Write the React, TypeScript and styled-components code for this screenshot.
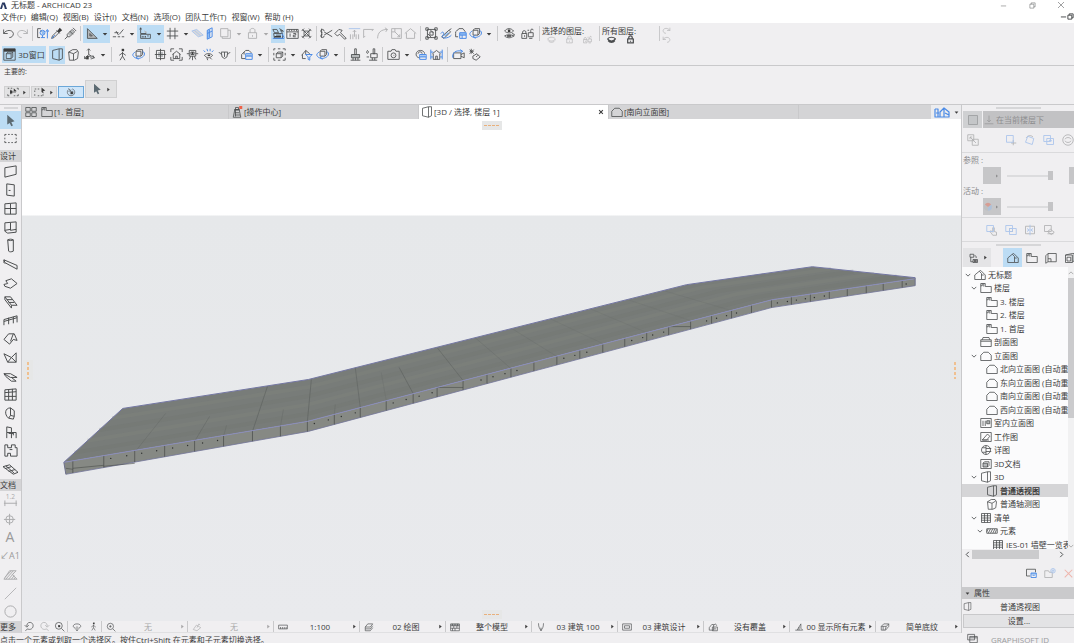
import React from "react";
import styled, { createGlobalStyle, css } from "styled-components";

const Global = createGlobalStyle`
  * { box-sizing: border-box; }
  body { margin: 0; overflow: hidden; }
  button, input { font: inherit; color: inherit; }
  ul { list-style: none; margin: 0; padding: 0; }
`;

const ink = "#3c3c3c";
const stroke = "#4a4c4e";
const blue = "#4a8ae6";
const line = "#c9c9cb";
const shade = "#d4d4d6";
const highlight = "#bcdcf4";

/* ---------- Icons: 16 x 16 grid; k = dark line, b = blue line, f = dark fill, p = blue fill, g = grey fill ---------- */
type Glyph = { k?: string; b?: string; f?: string; p?: string; g?: string; r?: string; t?: string };

const glyphs: Record<string, Glyph> = {
  logo: { p: "M0 16L5 1h6l5 15h-5C10 9 8 6 6 5C7 9 6 13 4 16Z" },
  undo: { k: "M2 3v5h5M2 8C5 3 13 3 14 8c0 3-2 5-5 5" },
  redo: { k: "M14 3v5H9M14 8C11 3 3 3 2 8c0 3 2 5 5 5" },
  pick: { k: "M6 2H2v11h3M5 5h2", b: "M8 7m-3 0a3 3 0 1 0 6 0a3 3 0 1 0-6 0M14 14V4M12 6l2-3 2 3M6 13h5M8 10v3", p: "M7 5h3v4H7z" },
  dropper: { k: "M2 14l1-3 6-6 2 2-6 6zM8 4l4 4", f: "M9 5l3-4 3 3-4 3z", b: "M2 14l4-4" },
  syringe: { k: "M1 15l3-3M4 9l6-6 3 3-6 6H4zM11 1l4 4M7 5l4 4", g: "M5 9l5-5 2 2-5 5z" },
  setsq: { k: "M3 2v12h12zM6 8v3h3z", g: "M3 2v12h12zM6 8v3h3z" },
  guide: { k: "M1 12h4M7 12h3M12 12h3M3 7h5M9 9l5-6M5 5l3 5" },
  coord: { k: "M2 1v7h7M1 3l1-2 1 2M2 9h12v5H2zM4 11v2M6 11v2M8 11v2M10 11h2", g: "M6 4l4 2-2 2z" },
  grid: { k: "M5 1v14M11 1v14M1 5h14M1 11h14" },
  planes: { b: "M1 5l6-2 8 7-6 2zM4 4l8 7", g: "M1 5l6-2 8 7-6 2z" },
  slab: { b: "M4 4l6-3v11l-6 3zM7 3v10M4 8l6-3", p: "M4 4l3-1v10l-3 2z" },
  frames: { k: "M2 2h9v10H2zM4 12v2h10V4h-3" },
  lock: { k: "M5 7V4c0-3 6-3 6 0v3M3 7h10v7H3zM8 10v2" },
  surface: { k: "M1 3h5l2 4H3zM2 8h11v6H3zM9 2l5 3-3 3M5 10h6", f: "M3 11h8v2H3zM10 3l3 2-2 1z", b: "M1 14h14M12 8l3 5" },
  ruler: { k: "M1 3h14v11H1zM1 6h14M4 3v2M7 3v2M10 3v2M13 3v2M5 8v4M9 8h3v2H9v2h3" },
  cross: { k: "M3 3l10 10M13 3L3 13M5 5h6v6H5zM2 5l3-3M11 2l3 3M2 11l3 3M14 11l-3 3" },
  scissors: { k: "M2 2v11M15 4L5 10M15 12L5 6M5 5a2 2 0 1 0-2 2M3 9a2 2 0 1 0 2 2" },
  bend: { k: "M1 8l5-5 4 1-2 3 7 7-2 1-6-6-3 2z" },
  lift: { k: "M3 15V9M6 15V9M10 15V9M13 15V9M8 12V4M6 6l2-2 2 2", b: "M1 2h14" },
  elbow: { k: "M2 13V3h12M2 13l2-2M14 3l-2 2" },
  arc: { k: "M2 14C2 7 6 3 14 3M11 1l3 2-2 3" },
  expand: { k: "M2 2h12v12H2zM6 2v4H2M6 6l6 6M9 12h3V9" },
  house: { k: "M1 8l7-6 7 6M3 7v7h10V7" },
  group: { k: "M3 3h10v10H3zM1 1h3v3H1zM12 1h3v3h-3zM1 12h3v3H1zM12 12h3v3h-3zM6 6h4v4H6zM6 3l4 4M3 8l5 5" },
  pens: { k: "M2 12l9-8 2 2-8 8zM11 4l3-2", b: "M1 8c3-4 5 0 2 3c-1 4 8 3 11-1", p: "M5 10l5-4 1 2-5 4z" },
  cloudtable: { k: "M5 12H2V8C1 4 5 5 6 2h5l3 4", b: "M7 7h8v7H7zM7 10h8M10 10v4", p: "M7 7h8v3H7z" },
  orbit: { k: "M5 4h6v6H5zM5 4l2-2h6v6l-2 2", b: "M4 5C0 7 0 10 4 12c4 2 9 0 11-3c1-2 0-4-2-5M8 14l-3-2 3-2" },
  eyes: { k: "M2 5c3-4 8-4 11 0c-3 3-8 3-11 0M2 11c3-2 8-2 11 0c-3 3-8 3-11 0M11 8l3 1-1 3", f: "M6 3h3v3H6zM5 10h5v2H5z" },
  locks: { k: "M1 8h6v6H1zM2 8V6c0-2 4-2 4 0v2M9 7h6v5H9zM12 7V4c0-2 3-2 3 0M8 4h2M10 14h4", f: "M4 10h1v2H4z" },
  eye: { k: "M1 7c3-4 11-4 14 0c-3 5-11 5-14 0M2 10c3 4 9 4 12 0" },
  cubeview: { k: "M1 1h14v14H1zM1 4h14M4 7l2-2h6v6l-2 2H4zM4 7h6v6M10 7l2-2", f: "M1 1h14v3H1z" },
  persp: { k: "M2 3l8-2v14l-8-2zM10 1h4v12l-4 2" },
  axono: { k: "M2 5l5-3h5l2 3-1 8-4 2H3zM2 5l6 2 5-3M8 7v8" },
  axes: { k: "M7 1v7L2 13M7 8l7 4M5 11c3-2 6 0 5 3M5 3l2-2 2 2M2 10v3h3M12 9l2 3-3 1", f: "M4 10h3v4H4z" },
  walk: { k: "M8 5v5l-3 5M8 10l3 5M8 6L4 9M8 6l4 3", f: "M7 1h3v3H7z" },
  target: { k: "M8 1v14M1 8h14M3 3h10v10H3z", g: "M5 5h6v6H5z" },
  homezoom: { k: "M1 5V1h4M11 1h4v4M15 11v4h-4M5 15H1v-4M3 8l5-4 5 4M4 7v6h8V7M7 13v-3h2v3" },
  robot: { k: "M4 3h8v7H4zM6 5h4v3H6zM1 7h3M12 7h3M6 10l-2 4M10 10l2 4M8 10v5", f: "M7 5h2v3H7z" },
  sun: { k: "M3 9c3-3 7-3 10 0c-3 4-7 4-10 0M6 12l1 3M10 12l2 2", b: "M2 3l2 2M6 1l1 3M10 1v3M14 3l-2 2", f: "M7 8h3v2H7z" },
  glasses: { k: "M4 5h8l-1 6-3 2-3-2zM1 5l3 3M15 5l-3 3M8 5v6" },
  layered: { k: "M2 8l5-5h4l3 3M2 8v5h5M5 8V5", b: "M7 7h8v7H7zM7 10h8", p: "M8 8h6v2H8z" },
  selcube: { k: "M1 3V1h2M6 1h3M12 1h3v2M15 6v3M15 12v3h-3M9 15H6M3 15H1v-3M1 9V6M4 7l2-2h6v5l-2 2H4zM4 7h6v5M10 7l2-2" },
  filter: { k: "M2 9l5-6 5 4M3 8v5h4M7 3v5", b: "M7 8h8l-3 3v4l-2-1v-3z" },
  brush: { k: "M7 1h2v7H7zM3 8h10v4H3zM2 15h12M5 12v3M8 12v3M11 12v3", g: "M3 8h10v4H3z" },
  brushdrop: { k: "M10 1h2v6h-2zM7 7h8v5H7zM5 15h10M9 12v3M12 12v3M3 3c-3 4 2 5 1 1zM2 11h3" },
  camera: { k: "M1 4h4l1-2h4l1 2h4v10H1zM8 9m-3 0a3 3 0 1 0 6 0a3 3 0 1 0-6 0M8 9h1" },
  camtable: { k: "M7 12C1 12 1 3 8 3c3 0 5 2 5 4M5 7c0-3 5-3 5 0", b: "M7 8h8v6H7zM7 11h8", p: "M8 9h6v2H8z" },
  housegrid: { k: "M3 7l5-4 5 4M4 7v7h8V7M7 14v-4h2v4", b: "M1 2v12M15 2v12M1 5h3M12 5h3M1 11h3M12 11h3" },
  fly: { k: "M2 6h9v7H2zM11 8l4-2v6l-4-2", b: "M1 12C0 6 4 2 13 4M10 2l3 2-2 2" },
  gears: { k: "M2 4h5M4 1v6M2 2l5 5M7 2L2 7M6 10l5-3 4 4-5 4-4-2zM10 11l2-2" },
  arrow: { f: "M4 1l9 8-4 1 2 4-2 1-2-4-3 2z", g: "M5 3l6 5-3 1 1 4-2-4-2 1z" },
  marquee: { k: "M1 3h2M5 3h2M9 3h2M13 3h2v2M15 7v2M15 11v2h-2M11 13H9M7 13H5M3 13H1v-2M1 9V7M1 5V3" },
  selarrow: { k: "M1 3h2M13 3h2v2M15 11v2h-2M3 13H1v-2M4 8h8M5 5v6M9 13h2M5 3h2", f: "M9 3l4 4H9zM4 6h3v4H4z" },
  marqarrow: { k: "M1 4h2M5 4h2M1 13v-2M1 8V6M5 13h2M9 13h2M12 13v-2", f: "M10 2l5 4-3 1 1 3-3-2z" },
  spin: { k: "M4 4C0 8 3 14 8 14c7 0 8-9 2-11M4 8l4-4M8 7l-4-5M7 7h4v4H7z", f: "M8 8h3v3H8z" },
  wall: { k: "M2 4l12-2v9L2 14z" },
  door: { k: "M4 2l8 1v12l-8-1zM6 9h2" },
  window: { k: "M2 3l12-1v12H2zM8 3v11M2 8h12" },
  corner: { k: "M2 3l12-1v11l-9 1-3-2zM8 3v8l6-1M2 11l6-1" },
  column: { k: "M5 2c2-1 4-1 6 0v12c-2 1-4 1-5 0zM5 2c2 1 4 1 6 0" },
  beam: { k: "M1 3l14 6v4L2 6zM1 3v3l1 1" },
  slabt: { k: "M1 9l4-1-2-3 6-2 6 5-7 5-6-2z" },
  stair: { k: "M2 3h6l7 9H9zM4 6h6M6 9h6M2 3v3l7 9v-3" },
  rail: { k: "M1 7l14-4v7M1 7v6M6 5v7M11 4v7M1 9l14-4" },
  roof: { k: "M1 9l5-6h6l3 7-4-1-4 5zM11 3L8 11" },
  shell: { k: "M1 4l4 9 9 0V3l-5 5zM5 13l4-5 5 5" },
  sky: { k: "M1 5h7l7 4H8zM3 8l6 5h5l-5-4M1 5l2 3" },
  curtain: { k: "M2 3l12-1v12l-12 0zM6 3v11M10 2v12M2 6l12-1M2 10h12" },
  morph: { k: "M8 2C2 2 1 9 6 13l2-3zM8 2l4 3v6l-4-1M6 13l5 1 1-3" },
  chair: { k: "M4 2l5 1v5H4zM4 8v6M9 8h5v6M9 8v6M6 9h5M11 8v3" },
  zone: { k: "M2 2h3v3h4V2h4v3h2v9H8v-3H5v3H2zM7 7h3" },
  mesh: { k: "M0 5l7-2 9 8-5 2zM3 4l9 8M2 7l7-2M6 10l7-2" },
  dim: { k: "M1 12h14M2 9v6M14 9v6", t: "1.2" },
  level: { k: "M7 3v12M1 9h12M7 9m-4 0a4 4 0 1 0 8 0a4 4 0 1 0-8 0" },
  fill: { k: "M1 13l6-9h7l-4 4 5 5zM3 13l8-9M6 13l6-7M9 13l3-4M2 11l7-7M12 13l1-2" },
  diag: { k: "M1 15L15 1" },
  circle: { k: "M8 8m-6 0a6 6 0 1 0 12 0a6 6 0 1 0-12 0" },
  tiles: { k: "M1 2h6v5H1zM9 2h6v5H9zM1 9h6v5H1zM9 9h6v5H9z" },
  story: { k: "M1 14V2h6v4h8v8zM1 5h2V2M5 2v4" },
  lighthouse: { k: "M5 5h6l2 10H3zM6 2h4v3H6zM4 5h8M5 9h6M5 12h7M6 5v9", r: "M11 0h4v4h-4z" },
  elev: { k: "M1 14V7l4-4h6l4 4v7z" },
  section: { k: "M1 5h14v9H1zM3 5l1-3h8l1 3M1 7h14" },
  interior: { k: "M1 2h14v12H1zM4 5v7M7 5v7M9 5h4v4H9z", g: "M9 5h4v4H9z" },
  sheet: { k: "M1 2h14v12H1zM3 12l7-8 3 3-4 5zM3 12h9" },
  detail: { k: "M8 8m-6 0a6 6 0 1 0 12 0a6 6 0 1 0-12 0M8 2v12M8 6h7M8 10h7M3 5h5M3 11h5" },
  doc3d: { k: "M1 2h14v12H1zM4 7l2-2h6v5l-2 2H4zM4 7h6v5", g: "M4 7h6v5H4z" },
  list: { k: "M2 2h12v12H2zM6 2v12M10 2v12M2 5h12M2 8h12M2 11h12" },
  wallhatch: { k: "M1 5h14v6H1zM3 11l3-6M6 11l3-6M9 11l3-6M12 11l2-5M1 9l2-4" },
  project: { k: "M1 14V8l6-5 3 3v8zM7 3l2-1 6 6v6h-5M10 8h3" },
  camhouse: { b: "M1 5h3v8M1 5v8h5M2 9h3M6 13V8l4-4 5 4v5zM10 4v9M11 9l4 2" },
  fit: { k: "M7 7m-5 0a5 5 0 1 0 10 0a5 5 0 1 0-10 0M11 11l4 4M5 7h4M7 5v4" },
  zoomin: { k: "M7 7m-5 0a5 5 0 1 0 10 0a5 5 0 1 0-10 0M11 11l4 4", f: "M6 6h3v3H6z" },
  zprev: { k: "M6 12c8 2 10-9 3-10C5 2 4 5 4 8M1 6l3 3 3-3M2 14l4-3" },
  znext: { k: "M10 12C2 14 0 3 7 2c4 0 5 3 5 6M9 6l3 3 3-3M14 14l-4-3" },
  turn: { k: "M6 10C0 9 1 3 8 3s8 6 2 7M8 7v7M6 12l2 2 2-2" },
  scale: { k: "M1 5h14v6H1zM4 8v3M7 8v3M10 8v3M13 8v3" },
  layers: { k: "M2 8l4-5h8l-4 5zM2 11h1h7l4-5M2 14h8l4-5M2 8v6" },
  model: { k: "M1 3h14v11H1zM4 3v3M8 3v3M12 3v3M1 6h14M1 10h14M6 6v4M11 6v4M4 10v4M8 10v4", g: "M1 3h14v3H1z" },
  pen: { k: "M4 2c0 7 2 8 4 12c2-4 4-5 4-12M8 9v5" },
  mvo: { k: "M1 3h14v10H1zM4 6h8v4H4z" },
  over: { k: "M2 9l4-5h3v9H2zM7 8h8v6H7zM9 5l3-2 2 3M9 11h4" },
  reno: { k: "M2 13h12l-3-3V3L5 13M8 8v5" },
  hatch: { k: "M2 7l4-4h8v4l-5 6H2zM2 7h8l4-4M8 13l2-6M5 7v6" },
  angle: { k: "M2 12l5-7 7 4-6 5zM8 9l3-6 2 2" },
  plane: { k: "M2 2h12v12H2z", g: "M2 2h12v12H2z" },
  below: { k: "M8 1v10M5 8l3 3 3-3M1 14h14" },
  swap: { k: "M1 1h8v8H1zM7 7h8v8H7zM4 4l8 8M4 7V4h3" },
  move: { b: "M2 2h9v9H2z", k: "M11 8v7M8 12h7" },
  rotate: { b: "M5 3l8 3-2 8-9-3z", k: "M3 5c2-3 6-4 9-1" },
  offset: { b: "M1 2h9v8H1zM5 6h9v8H5zM8 9h4M8 9l2-2" },
  refresh: { k: "M8 8m-7 0a7 7 0 1 0 14 0a7 7 0 1 0-14 0M4 7c1-3 7-3 8 0M12 9c-1 3-7 3-8 0" },
  hand: { b: "M1 2h9v8H1z", k: "M7 12l-2-2 2-1 2 2V5h2v5l3 1v4H9z" },
  dup: { b: "M1 2h9v8H1zM6 6h9v8H6z", k: "M6 6h4v4H6z" },
  split: { k: "M2 3h12v10H2z", b: "M8 1v14M4 6l3 2-3 2M12 6L9 8l3 2" },
  erase: { k: "M2 2h9v8H2zM6 10l4-3 5 4-4 3zM6 13h8" },
  traceball: { r: "M8 8L3 4A6 6 0 0 1 13 4z", p: "M8 8l5-4a6 6 0 0 1-5 10z", g: "M8 8v6A6 6 0 0 1 3 4z" },
  people: { k: "M4 3h5v4H4zM5 7v6h3M8 10h6v4H8zM10 5c2 0 3 1 2 3", f: "M9 11h4v2H9z" },
  layout: { k: "M4 2h11v11H4zM4 13l-3 2V5l3-3M4 9h4v4" },
  book: { k: "M2 4l9-2h3v9l-3 3H2zM2 4h9v10M4 7h5v5H4z", g: "M11 4l3-2v9l-3 3z" },
  saveview: { k: "M7 12H2V3h12v4", b: "M8 8h7v6H8zM10 11h3", p: "M8 8h7v2H8z" },
  newview: { k: "M1 14V5h5l1 2h4v7z", b: "M12 5m-3 0a3 3 0 1 0 6 0a3 3 0 1 0-6 0M10 5h4M12 3v4" },
  del: { r: "M2 3l1-1 5 5 5-5 1 1-5 5 5 5-1 1-5-5-5 5-1-1 5-5z" },
  windows: { k: "M1 2h10v8H1zM4 5h11v9H4zM4 7h11" },
  min: { k: "M2 9h12" },
  max: { k: "M2 5h9v9H2zM5 5V2h9v9h-3" },
  close: { k: "M2 2l12 12M14 2L2 14" },
  closetab: { f: "M2 4l2-2 4 4 4-4 2 2-4 4 4 4-2 2-4-4-4 4-2-2 4-4z" },
  down: { f: "M2 5h12l-6 7z" },
  right: { f: "M4 2l8 6-8 6z" },
  chev: { k: "M2 5l6 6 6-6" },
  chevl: { k: "M11 2L5 8l6 6" },
  chevr: { k: "M5 2l6 6-6 6" },
  chevu: { k: "M2 11l6-6 6 6" },
};

const Svg = styled.svg<{ $muted?: boolean }>`
  display: block;
  flex: none;
  opacity: ${(p) => (p.$muted ? 0.4 : 1)};
`;

const Icon = ({ name, size = 13, muted, bold }: { name: string; size?: number; muted?: boolean; bold?: boolean }) => {
  const g = glyphs[name];
  const w = bold ? 2.2 : 1.05;
  return (
    <Svg width={size} height={size} viewBox="0 0 16 16" fill="none" $muted={muted} aria-hidden="true" strokeLinejoin="round">
      {g.g && <path d={g.g} fill={name === "arrow" ? "#7d8b93" : "#b5b8ba"} />}
      {g.p && <path d={g.p} fill={name === "logo" ? "#26365f" : "#8fbcf2"} />}
      {g.k && <path d={g.k} stroke={stroke} strokeWidth={w} />}
      {g.b && <path d={g.b} stroke={blue} strokeWidth={1.2} />}
      {g.f && <path d={g.f} fill={name === "arrow" ? "#5c6a72" : ink} />}
      {g.r && <path d={g.r} fill="#ef6148" />}
      {g.t && <text x="3" y="7" fontSize="7" fill={ink}>{g.t}</text>}
    </Svg>
  );
};

/* ---------- Frame ---------- */
const Shell = styled.div`
  display: flex;
  flex-direction: column;
  height: 100vh;
  overflow: hidden;
  background: #f0eff1;
  color: ${ink};
  font-family: "Open Sans", "Noto Sans CJK SC", sans-serif;
  font-size: 8px;
  line-height: 10px;
  white-space: nowrap;
`;
const bare = css`
  margin: 0;
  padding: 0;
  border: 0;
  background: none;
  display: flex;
  align-items: center;
  justify-content: center;
`;
const TitleBar = styled.header`
  display: flex;
  align-items: center;
  height: 10px;
  background: #fff;
  flex: none;
`;
const Title = styled.h1`
  margin: 0 auto 0 4px;
  font-size: 8px;
  font-weight: 400;
  line-height: 10px;
`;
const WinButton = styled.button<{ $w: number }>`
  ${bare}
  width: ${(p) => p.$w}px;
  height: 10px;
`;
const MenuBar = styled.nav`
  display: flex;
  align-items: center;
  gap: 5px;
  height: 13px;
  padding-left: 1px;
  background: #fff;
  flex: none;
`;
const MenuItem = styled.button`
  ${bare}
  height: 13px;
`;
const MdiButtons = styled.div`
  display: flex;
  margin-left: auto;
`;
const Toolbar = styled.div<{ $last?: boolean }>`
  display: flex;
  align-items: center;
  height: ${(p) => (p.$last ? 22 : 21)}px;
  padding-left: ${(p) => (p.$last ? 2 : 1)}px;
  border-bottom: ${(p) => (p.$last ? `1px solid ${line}` : "0")};
  flex: none;
`;
const Tool = styled.button<{ $w: number; $on?: boolean }>`
  ${bare}
  width: ${(p) => p.$w}px;
  height: 18px;
  flex: none;
  background: ${(p) => (p.$on ? highlight : "transparent")};
`;
const Rule = styled.span`
  width: 6px;
  height: 15px;
  flex: none;
  display: flex;
  justify-content: center;
  &::before {
    content: "";
    width: 1px;
    background: ${line};
  }
`;
const WindowButton = styled.button`
  ${bare}
  gap: 2px;
  width: 44px;
  height: 17px;
  margin-right: 3px;
  background: ${highlight};
`;
const LayerGroup = styled.div<{ $w: number }>`
  width: ${(p) => p.$w}px;
  height: 20px;
  padding-top: 2px;
  flex: none;
`;
const LayerIcons = styled.div`
  display: flex;
`;
const LayerIcon = styled.button`
  ${bare}
  width: 19px;
  height: 8px;
`;
const InfoBar = styled.div`
  display: flex;
  flex-direction: column;
  justify-content: space-between;
  height: 39px;
  padding: 1px 4px 6px;
  border-bottom: 1px solid ${line};
  font-size: 7px;
  flex: none;
`;
const InfoButtons = styled.div`
  display: flex;
  align-items: flex-end;
  gap: 1px;
`;
const InfoButton = styled.button<{ $on?: boolean; $tall?: boolean }>`
  ${bare}
  gap: 3px;
  width: ${(p) => (p.$tall ? 32 : 26)}px;
  height: ${(p) => (p.$tall ? 18 : 12)}px;
  background: ${(p) => (p.$on ? "#cfe6fa" : "#e2e2e3")};
  border: 1px solid ${(p) => (p.$on ? "#6ba7d8" : "#d0d0d1")};
`;
const Body = styled.div`
  display: flex;
  flex: 1;
  min-height: 0;
`;

/* ---------- Toolbox ---------- */
const Toolbox = styled.aside`
  display: flex;
  flex-direction: column;
  width: 22px;
  flex: none;
  border-right: 1px solid ${line};
`;
const Grip = styled.div<{ $w: number }>`
  height: 6px;
  display: flex;
  align-items: center;
  justify-content: center;
  flex: none;
  &::before {
    content: "";
    width: ${(p) => p.$w}px;
    height: 2px;
    background: #d6d6d8;
  }
`;
const SelectTools = styled.div`
  display: flex;
  flex-direction: column;
  height: 39px;
  padding-bottom: 3px;
  flex: none;
`;
const ToolGroup = styled.div<{ $n: number }>`
  display: flex;
  flex-direction: column;
  flex: ${(p) => p.$n};
  min-height: 0;
`;
const SideTool = styled.button<{ $on?: boolean }>`
  ${bare}
  flex: 1;
  min-height: 0;
  padding-right: 1px;
  background: ${(p) => (p.$on ? highlight : "transparent")};
`;
const SideText = styled.span<{ $size: number }>`
  font-size: ${(p) => p.$size}px;
  color: #9a9a9a;
`;
const SideHeader = styled.h2`
  margin: 0;
  height: 12px;
  font-size: 8px;
  font-weight: 400;
  line-height: 12px;
  background: ${shade};
  flex: none;
`;

/* ---------- Centre ---------- */
const Center = styled.main`
  display: flex;
  flex-direction: column;
  flex: 1;
  min-width: 0;
`;
const Tabs = styled.div`
  display: flex;
  height: 14px;
  background: ${shade};
  flex: none;
`;
const Tab = styled.button<{ $on?: boolean }>`
  ${bare}
  justify-content: flex-start;
  flex: 0 1 190px;
  min-width: 0;
  gap: 1px;
  padding: 0 4px 0 2px;
  background: ${(p) => (p.$on ? "#fff" : "transparent")};
  border-right: 1px solid ${line};
`;
const TabClose = styled.span`
  margin-left: auto;
`;
const TabExtra = styled.button<{ $w: number; $end?: boolean }>`
  ${bare}
  gap: 4px;
  width: ${(p) => p.$w}px;
  flex: none;
  margin-left: ${(p) => (p.$end ? "auto" : "0")};
  background: ${(p) => (p.$end ? "#ececee" : "transparent")};
`;
const Viewport = styled.section`
  position: relative;
  flex: 1;
  min-height: 0;
  background: linear-gradient(#fff 0 96px, #e6e8ea 97px, #e9eaed 100%);
`;
const Scene = styled.svg`
  display: block;
  width: 100%;
  height: 100%;
`;
const Dots = styled.span<{ $side: "top" | "bottom" | "left" | "right" }>`
  position: absolute;
  display: flex;
  align-items: center;
  justify-content: center;
  background: #e6e7e7;
  ${(p) =>
    p.$side === "top" || p.$side === "bottom"
      ? css`
          ${p.$side}: 2px;
          left: 50%;
          margin-left: -10px;
          width: 20px;
          height: 9px;
          &::before {
            content: "";
            width: 15px;
            height: 1px;
            background: repeating-linear-gradient(90deg, #e9b07c 0 3px, transparent 3px 4px);
          }
        `
      : css`
          ${p.$side}: 1px;
          top: 50%;
          margin-top: -10px;
          width: 10px;
          height: 20px;
          &::before {
            content: "";
            width: 2px;
            height: 17px;
            background: repeating-linear-gradient(#f0c08f 0 3px, transparent 3px 5px);
          }
        `}
`;
const QuickBar = styled.div`
  display: flex;
  height: 12px;
  flex: none;
  border-bottom: 1px solid #e0e0e2;
`;
const QuickTools = styled.div<{ $w: number }>`
  display: flex;
  width: ${(p) => p.$w}px;
  justify-content: space-around;
  flex: none;
  border-right: 1px solid ${line};
`;
const QuickIcon = styled.button`
  ${bare}
`;
const QuickOption = styled.button<{ $muted?: boolean }>`
  ${bare}
  flex: 1 1 0;
  min-width: 0;
  padding: 0 2px 0 4px;
  border-right: 1px solid ${line};
  color: ${(p) => (p.$muted ? "#a9a9a9" : ink)};
  &:last-child { border-right: 0; }
`;
const QuickLabel = styled.span`
  flex: 1;
  text-align: center;
`;

/* ---------- Right panel ---------- */
const Panel = styled.aside`
  display: flex;
  flex-direction: column;
  width: 113px;
  flex: none;
  border-left: 1px solid ${line};
  overflow: hidden;
`;
const TraceHead = styled.div`
  display: flex;
  gap: 1px;
  height: 17px;
  padding-left: 1px;
  flex: none;
`;
const TraceToggle = styled.button`
  ${bare}
  width: 19px;
  background: #cfd0d2;
`;
const TraceMenu = styled.button`
  ${bare}
  flex: 1;
  gap: 2px;
  justify-content: flex-start;
  padding-left: 1px;
  background: #c2c2c4;
  color: #8d8d8f;
`;
const TraceTools = styled.div<{ $pad: number; $ruled?: boolean }>`
  display: flex;
  align-items: center;
  height: 25px;
  padding-left: ${(p) => p.$pad}px;
  margin-top: ${(p) => (p.$ruled ? 2 : 0)}px;
  border-top: ${(p) => (p.$ruled ? "1px solid #dadadc" : "0")};
  border-bottom: 1px solid #dadadc;
  flex: none;
`;
const TraceTool = styled.button`
  ${bare}
  width: 19px;
  flex: none;
`;
const Spacer = styled.span`
  width: 19px;
  flex: none;
`;
const SliderLabel = styled.label`
  height: 14px;
  line-height: 14px;
  padding-left: 1px;
  color: #8a8a8c;
  flex: none;
`;
const SliderRow = styled.div`
  display: flex;
  align-items: center;
  height: 17px;
  padding-left: 21px;
  flex: none;
`;
const Swatch = styled.button`
  ${bare}
  gap: 2px;
  width: 18px;
  height: 17px;
  flex: none;
  justify-content: flex-end;
  padding-right: 2px;
  background: #c6c6c8;
`;
const Slider = styled.input`
  appearance: none;
  width: 46px;
  height: 10px;
  margin: 0 16px 0 6px;
  background: linear-gradient(transparent 4px, #dcdcde 4px 6px, transparent 6px);
  flex: none;
  &::-webkit-slider-thumb {
    appearance: none;
    width: 5px;
    height: 9px;
    background: #c4c4c6;
  }
`;
const NavTabs = styled.div`
  display: flex;
  height: 19px;
  padding-left: 1px;
  flex: none;
`;
const NavChooser = styled.button`
  ${bare}
  gap: 4px;
  width: 28px;
  flex: none;
  background: #e4e4e6;
  margin-right: 12px;
`;
const NavTab = styled.button<{ $on?: boolean }>`
  ${bare}
  width: 19px;
  flex: none;
  background: ${(p) => (p.$on ? highlight : "transparent")};
`;
const TreeArea = styled.div`
  display: flex;
  flex: 1;
  min-height: 0;
  overflow: hidden;
  background: #fbfbfc;
`;
const Tree = styled.ul`
  flex: 1;
  min-width: 0;
  padding-top: 1px;
  overflow: hidden;
`;
const Node = styled.li<{ $level: number; $on?: boolean }>`
  display: flex;
  align-items: center;
  height: 13px;
  padding-left: ${(p) => 2 + p.$level * 6}px;
  background: ${(p) => (p.$on ? "#d5d5d7" : "transparent")};
  font-weight: ${(p) => (p.$on ? 700 : 400)};
  &:nth-child(even) { height: 14px; }
`;
const Chevron = styled.span`
  width: 10px;
  flex: none;
  padding-left: 1px;
`;
const NodeText = styled.span`
  margin-left: 2px;
`;
const VScroll = styled.div`
  display: flex;
  flex-direction: column;
  align-items: center;
  gap: 2px;
  width: 6px;
  padding-top: 3px;
  background: #f1f1f2;
  flex: none;
`;
const VThumb = styled.div`
  width: 6px;
  height: 140px;
  margin-bottom: auto;
  background: #cbcbcd;
`;
const HScroll = styled.div`
  display: flex;
  align-items: center;
  height: 10px;
  padding: 0 9px 0 2px;
  flex: none;
`;
const HThumb = styled.div`
  width: 67px;
  height: 9px;
  margin: 0 auto 0 1px;
  background: #cbcbcd;
`;
const NavActions = styled.div`
  display: flex;
  align-items: center;
  height: 28px;
  padding-left: 59px;
  flex: none;
`;
const PropHeader = styled.button`
  ${bare}
  justify-content: flex-start;
  gap: 4px;
  height: 12px;
  padding-left: 3px;
  background: #cacacc;
  flex: none;
`;
const PropRow = styled.div`
  display: flex;
  align-items: center;
  height: 15px;
  padding-left: 1px;
  flex: none;
`;
const PropName = styled.span`
  flex: 1;
  padding-right: 6px;
  text-align: center;
`;
const Settings = styled.button`
  ${bare}
  height: 14px;
  margin: 0 0 5px 1px;
  border: 1px solid ${line};
  border-right: 0;
  background: #e3e3e5;
  flex: none;
`;
const Footer = styled.footer`
  display: flex;
  height: 10px;
  flex: none;
  overflow: hidden;
  line-height: 14px;
`;
const Brand = styled.div`
  display: flex;
  gap: 13px;
  width: 107px;
  margin-left: auto;
  color: #9b9b9d;
`;

/* ---------- Data ---------- */
type Item = [string, number, ("on" | "off")?] | "rule";
const row1: Item[] = [
  ["undo", 14], ["redo", 14, "off"], "rule", ["pick", 14], ["dropper", 14], ["syringe", 14], "rule",
  ["setsq", 16, "on"], ["down", 11, "on"], ["guide", 16], ["down", 11], ["coord", 16, "on"], ["down", 11, "on"],
  ["grid", 16], ["down", 11], ["planes", 13, "off"], ["slab", 13], ["frames", 16, "off"], ["down", 11, "off"],
  ["lock", 16, "off"], ["down", 11, "off"], ["surface", 14, "on"], ["ruler", 14], ["cross", 14], "rule",
  ["scissors", 14], ["bend", 14], ["lift", 14, "off"], ["elbow", 14, "off"], ["arc", 14, "off"], ["expand", 14, "off"],
  ["house", 14, "off"], "rule", ["group", 16], ["pens", 14], ["cloudtable", 14], ["orbit", 16], ["down", 11], "rule",
  ["eyes", 18], ["locks", 18],
];
const row2: Item[] = [
  ["persp", 16, "on"], ["axono", 16], ["axes", 16], ["down", 11], "rule", ["walk", 16], ["orbit", 16], "rule",
  ["target", 16], ["homezoom", 16], ["robot", 16], ["sun", 16], ["glasses", 16], "rule", ["layered", 16], ["down", 11], "rule",
  ["selcube", 16], ["down", 11], ["filter", 16], ["orbit", 16], ["down", 11], "rule", ["brush", 16], ["brushdrop", 16], "rule",
  ["camera", 16], ["down", 11], ["camtable", 16], ["housegrid", 16], "rule", ["fly", 16], ["gears", 16],
];
const menus = ["文件(F)", "编辑(Q)", "视图(B)", "设计(I)", "文档(N)", "选项(O)", "团队工作(T)", "视窗(W)", "帮助 (H)"];
const design = ["wall", "door", "window", "corner", "column", "beam", "slabt", "stair", "rail", "roof", "shell", "sky", "curtain", "morph", "chair", "zone", "mesh"];
const options: [string, string, boolean?][] = [
  ["fit", "无", true], ["angle", "无", true], ["scale", "1:100"], ["layers", "02 绘图"], ["model", "整个模型"], ["pen", "03 建筑 100"],
  ["mvo", "03 建筑设计"], ["over", "没有覆盖"], ["reno", "00 显示所有元素"], ["hatch", "简单底纹"],
];
const tree: [number, string, string, ("open" | "on")?][] = [
  [0, "project", "无标题", "open"], [1, "story", "楼层", "open"], [2, "story", "3. 楼层"], [2, "story", "2. 楼层"],
  [2, "story", "1. 首层"], [1, "section", "剖面图"], [1, "elev", "立面图", "open"], [2, "elev", "北向立面图 (自动重建模型)"],
  [2, "elev", "东向立面图 (自动重建模型)"], [2, "elev", "南向立面图 (自动重建模型)"], [2, "elev", "西向立面图 (自动重建模型)"],
  [1, "interior", "室内立面图"], [1, "sheet", "工作图"], [1, "detail", "详图"], [1, "doc3d", "3D文档"], [1, "persp", "3D", "open"],
  [2, "persp", "普通透视图", "on"], [2, "axono", "普通轴测图"], [1, "list", "清单", "open"], [2, "wallhatch", "元素", "open"],
  [3, "list", "IES-01 墙壁一览表"],
];

/* ---------- Slab model ---------- */
type Pt = [number, number];
const back: Pt[] = [[122, 408], [308, 379], [687, 284], [813, 266], [916, 277]];
const front: Pt[] = [[63, 462], [307, 421], [773, 299], [916, 278]];
const base: Pt[] = [[65, 474], [308, 431], [772, 307], [916, 285]];
const joints = [72, 103, 134, 164, 194, 223, 252, 280, 307, 334, 360, 386, 413, 437, 463, 487, 511, 534, 557, 580, 603, 625, 647, 669, 691, 712, 732, 752, 772, 792, 811, 830, 848, 867, 884, 903];
const bolts = [110, 126, 141, 156, 172, 187, 202, 217, 314, 328, 341, 355, 393, 406, 419, 432, 481, 493, 505, 517, 564, 575, 587, 632, 643, 653, 664, 707, 717, 727, 737, 778, 788, 797, 806, 815, 825, 907];
const seams: [number, number, number, number, number][] = [
  [134, 452, 165, 413, 0.3], [194, 441, 209, 416, 0.4], [223, 436, 226, 425, 0.3], [252, 431, 267, 386, 0.6], [280, 426, 283, 409, 0.3],
  [307, 421, 311, 379, 0.6], [334, 414, 335, 404, 0.3], [360, 407, 355, 367, 0.5], [386, 400, 381, 372, 0.2], [413, 393, 399, 367, 0.6],
  [463, 380, 437, 347, 0.5], [511, 368, 475, 337, 0.25], [557, 356, 512, 328, 0.2], [603, 343, 550, 318, 0.15], [647, 332, 590, 308, 0.15],
  [691, 320, 628, 299, 0.15], [732, 310, 664, 290, 0.15],
];
const yAt = (pts: Pt[], x: number) => {
  const i = Math.max(1, pts.findIndex((p) => p[0] >= x));
  const [a, b] = [pts[i - 1], pts[i]];
  return a[1] + ((x - a[0]) / (b[0] - a[0])) * (b[1] - a[1]);
};
const poly = (pts: Pt[]) => pts.map((p) => p.join(",")).join(" ");
const streak = (t: number) =>
  poly(([[63, 462, 122, 408], [307, 421, 308, 379], [773, 299, 687, 284], [916, 278, 813, 266]] as number[][]).map(
    ([x1, y1, x2, y2]) => [x1 + (x2 - x1) * t, y1 + (y2 - y1) * t] as Pt,
  ));

const Slab = () => (
  <Scene viewBox="22 118 939 503" role="img" aria-label="3D">
    <polygon points={poly([...back, ...[...front].reverse()])} fill="#787c79" />
    {[0.18, 0.4, 0.6, 0.82].map((t, i) => (
      <polyline key={t} points={streak(t)} fill="none" stroke={i % 2 ? "#828681" : "#6e726f"} strokeWidth="4" opacity="0.25" />
    ))}
    {seams.map(([x1, y1, x2, y2, o]) => (
      <line key={x1} x1={x1} y1={y1} x2={x2} y2={y2} stroke="#5c605e" opacity={o} />
    ))}
    <polygon points={poly([...front, ...[...base].reverse()])} fill="#868984" />
    <polyline points={poly(base)} fill="none" stroke="#74769a" strokeWidth="0.8" />
    <path d="M65 468l7 1M72 468l31-3M437 387l26 0M669 326l22 0M103 466l31-3" stroke="#4a4d4a" strokeWidth="0.6" />
    {joints.map((x) => (
      <line key={x} x1={x} x2={x} y1={yAt(front, x)} y2={yAt(base, x)} stroke="#474a48" strokeWidth="0.7" />
    ))}
    {bolts.map((x) => (
      <circle key={x} cx={x} cy={yAt(front, x) + 4} r="0.7" fill="#2f3131" />
    ))}
    <polyline points={poly([[63, 462], ...back])} fill="none" stroke="#7376a3" />
    <polyline points={poly(front)} fill="none" stroke="#8a8dbb" />
    <path d="M63 462l2 12M916 277v8" stroke="#6c6f8c" />
  </Scene>
);

const Tools = ({ items }: { items: Item[] }) => (
  <>
    {items.map((it, i) =>
      it === "rule" ? (
        <Rule key={i} />
      ) : (
        <Tool key={i} $w={it[1]} $on={it[2] === "on"} disabled={it[2] === "off"} aria-label={it[0]}>
          <Icon name={it[0]} size={it[0] === "down" ? 6 : 13} muted={it[2] === "off"} />
        </Tool>
      ),
    )}
  </>
);

export default function App() {
  return (
    <Shell>
      <Global />
      <TitleBar>
        <Icon name="logo" size={7} />
        <Title>无标题 - ARCHICAD 23</Title>
        <WinButton $w={29} aria-label="最小化"><Icon name="min" size={7} /></WinButton>
        <WinButton $w={29} aria-label="还原"><Icon name="max" size={7} /></WinButton>
        <WinButton $w={27} aria-label="关闭"><Icon name="close" size={8} /></WinButton>
      </TitleBar>
      <MenuBar>
        {menus.map((m) => <MenuItem key={m}>{m}</MenuItem>)}
        <MdiButtons>
          <WinButton $w={7} aria-label="最小化文档"><Icon name="min" size={7} bold /></WinButton>
          <WinButton $w={7} aria-label="还原文档"><Icon name="max" size={7} bold /></WinButton>
        </MdiButtons>
      </MenuBar>
      <Toolbar>
        <Tools items={row1} />
        <Rule />
        <LayerGroup $w={54}>
          选择的图层:
          <LayerIcons>
            {["eye", "lock", "locks"].map((n) => (
              <LayerIcon key={n} disabled aria-label={n}><Icon name={n} size={9} muted /></LayerIcon>
            ))}
          </LayerIcons>
        </LayerGroup>
        <Rule />
        <LayerGroup $w={54}>
          所有图层:
          <LayerIcons>
            {["eye", "lock"].map((n) => (
              <LayerIcon key={n} aria-label={n}><Icon name={n} size={9} bold /></LayerIcon>
            ))}
          </LayerIcons>
        </LayerGroup>
        <Rule />
        <LayerGroup $w={16}>
          <Icon name="redo" size={9} muted />
          <Icon name="undo" size={9} muted />
        </LayerGroup>
      </Toolbar>
      <Toolbar $last>
        <WindowButton><Icon name="cubeview" />3D窗口</WindowButton>
        <Tools items={row2} />
      </Toolbar>
      <InfoBar>
        <span>主要的:</span>
        <InfoButtons>
          <InfoButton aria-label="选择"><Icon name="selarrow" size={12} /><Icon name="right" size={5} /></InfoButton>
          <InfoButton aria-label="选取框"><Icon name="marqarrow" size={12} /><Icon name="right" size={5} /></InfoButton>
          <InfoButton $on aria-label="旋转"><Icon name="spin" size={10} /></InfoButton>
          <InfoButton $tall aria-label="箭头"><Icon name="arrow" size={12} /><Icon name="right" size={5} /></InfoButton>
        </InfoButtons>
      </InfoBar>
      <Body>
        <Toolbox>
          <Grip $w={14} />
          <SelectTools>
            <SideTool $on aria-label="箭头"><Icon name="arrow" /></SideTool>
            <SideTool aria-label="选取框"><Icon name="marquee" /></SideTool>
          </SelectTools>
          <SideHeader>设计</SideHeader>
          <ToolGroup $n={17}>
            {design.map((n) => <SideTool key={n} aria-label={n}><Icon name={n} size={15} /></SideTool>)}
          </ToolGroup>
          <SideHeader>文档</SideHeader>
          <ToolGroup $n={7}>
            <SideTool aria-label="标注"><Icon name="dim" size={15} muted /></SideTool>
            <SideTool aria-label="标高"><Icon name="level" size={15} muted /></SideTool>
            <SideTool><SideText $size={14}>A</SideText></SideTool>
            <SideTool><SideText $size={9}>↙A1</SideText></SideTool>
            <SideTool aria-label="填充"><Icon name="fill" size={15} muted /></SideTool>
            <SideTool aria-label="线"><Icon name="diag" size={13} muted /></SideTool>
            <SideTool aria-label="圆"><Icon name="circle" size={15} muted /></SideTool>
          </ToolGroup>
          <SideHeader>更多</SideHeader>
        </Toolbox>
        <Center>
          <Tabs>
            <TabExtra $w={17} aria-label="标签概览"><Icon name="tiles" size={12} /></TabExtra>
            <Tab><Icon name="story" size={12} />[1. 首层]</Tab>
            <Tab><Icon name="lighthouse" size={12} />[操作中心]</Tab>
            <Tab $on><Icon name="persp" size={12} />[3D / 选择, 楼层 1]<TabClose><Icon name="closetab" size={6} /></TabClose></Tab>
            <Tab><Icon name="elev" size={12} />[南向立面图]</Tab>
            <TabExtra $w={30} $end aria-label="视图"><Icon name="camhouse" size={16} /><Icon name="down" size={5} /></TabExtra>
          </Tabs>
          <Viewport>
            <Slab />
            <Dots $side="top" /><Dots $side="bottom" /><Dots $side="left" /><Dots $side="right" />
          </Viewport>
          <QuickBar>
            <QuickTools $w={46}>
              <QuickIcon aria-label="上一缩放"><Icon name="zprev" size={11} /></QuickIcon>
              <QuickIcon aria-label="下一缩放"><Icon name="znext" size={11} muted /></QuickIcon>
              <QuickIcon aria-label="放大"><Icon name="zoomin" size={11} /></QuickIcon>
            </QuickTools>
            <QuickTools $w={34}>
              <QuickIcon aria-label="环绕"><Icon name="turn" size={10} /></QuickIcon>
              <QuickIcon aria-label="漫游"><Icon name="walk" size={9} /></QuickIcon>
            </QuickTools>
            {options.map(([icon, label, muted]) => (
              <QuickOption key={icon} $muted={muted}>
                <Icon name={icon} size={10} muted={muted && icon !== "fit"} />
                <QuickLabel>{label}</QuickLabel>
                <Icon name="right" size={5} muted={muted} />
              </QuickOption>
            ))}
          </QuickBar>
        </Center>
        <Panel>
          <Grip $w={45} />
          <TraceHead>
            <TraceToggle aria-label="描绘"><Icon name="plane" size={12} muted /></TraceToggle>
            <TraceMenu disabled><Icon name="below" size={10} muted />在当前楼层下</TraceMenu>
          </TraceHead>
          <TraceTools $pad={1}>
            <TraceTool disabled aria-label="切换"><Icon name="swap" size={12} muted /></TraceTool>
            <Spacer />
            {["move", "rotate", "offset", "refresh"].map((n) => (
              <TraceTool key={n} disabled aria-label={n}><Icon name={n} size={12} muted /></TraceTool>
            ))}
          </TraceTools>
          <SliderLabel htmlFor="reference">参照 :</SliderLabel>
          <SliderRow>
            <Swatch disabled aria-label="参照颜色"><Icon name="right" size={4} muted /></Swatch>
            <Slider id="reference" type="range" defaultValue={100} disabled />
            <Swatch disabled aria-label="参照选项" />
          </SliderRow>
          <SliderLabel htmlFor="active">活动 :</SliderLabel>
          <SliderRow>
            <Swatch disabled aria-label="活动颜色"><Icon name="traceball" size={10} muted /><Icon name="right" size={4} muted /></Swatch>
            <Slider id="active" type="range" defaultValue={100} disabled />
          </SliderRow>
          <TraceTools $pad={20} $ruled>
            {["hand", "dup", "split", "erase"].map((n) => (
              <TraceTool key={n} disabled aria-label={n}><Icon name={n} size={12} muted /></TraceTool>
            ))}
          </TraceTools>
          <Grip $w={45} />
          <NavTabs>
            <NavChooser aria-label="浏览器"><Icon name="people" size={12} /><Icon name="right" size={5} /></NavChooser>
            {["project", "story", "layout", "book"].map((n, i) => (
              <NavTab key={n} $on={i === 0} aria-label={n}><Icon name={n} size={12} /></NavTab>
            ))}
          </NavTabs>
          <TreeArea>
            <Tree>
              {tree.map(([level, icon, text, state]) => (
                <Node key={text} $level={level} $on={state === "on"}>
                  <Chevron>{state === "open" && <Icon name="chev" size={6} bold />}</Chevron>
                  <Icon name={icon} size={12} />
                  <NodeText>{text}</NodeText>
                </Node>
              ))}
            </Tree>
            <VScroll>
              <Icon name="chevu" size={6} />
              <VThumb />
              <Icon name="chev" size={6} />
            </VScroll>
          </TreeArea>
          <HScroll>
            <Icon name="chevl" size={7} bold />
            <HThumb />
            <Icon name="chevr" size={7} bold />
          </HScroll>
          <NavActions>
            <NavTab aria-label="保存视图"><Icon name="saveview" size={12} /></NavTab>
            <NavTab aria-label="新建" disabled><Icon name="newview" size={12} muted /></NavTab>
            <NavTab aria-label="删除"><Icon name="del" size={11} muted /></NavTab>
          </NavActions>
          <PropHeader><Icon name="down" size={5} />属性</PropHeader>
          <PropRow><Icon name="persp" size={9} /><PropName>普通透视图</PropName></PropRow>
          <Settings>设置...</Settings>
        </Panel>
      </Body>
      <Footer>
        <span>点击一个元素或划取一个选择区。按住Ctrl+Shift 在元素和子元素切换选择。</span>
        <Brand><Icon name="windows" size={11} />GRAPHISOFT ID</Brand>
      </Footer>
    </Shell>
  );
}
